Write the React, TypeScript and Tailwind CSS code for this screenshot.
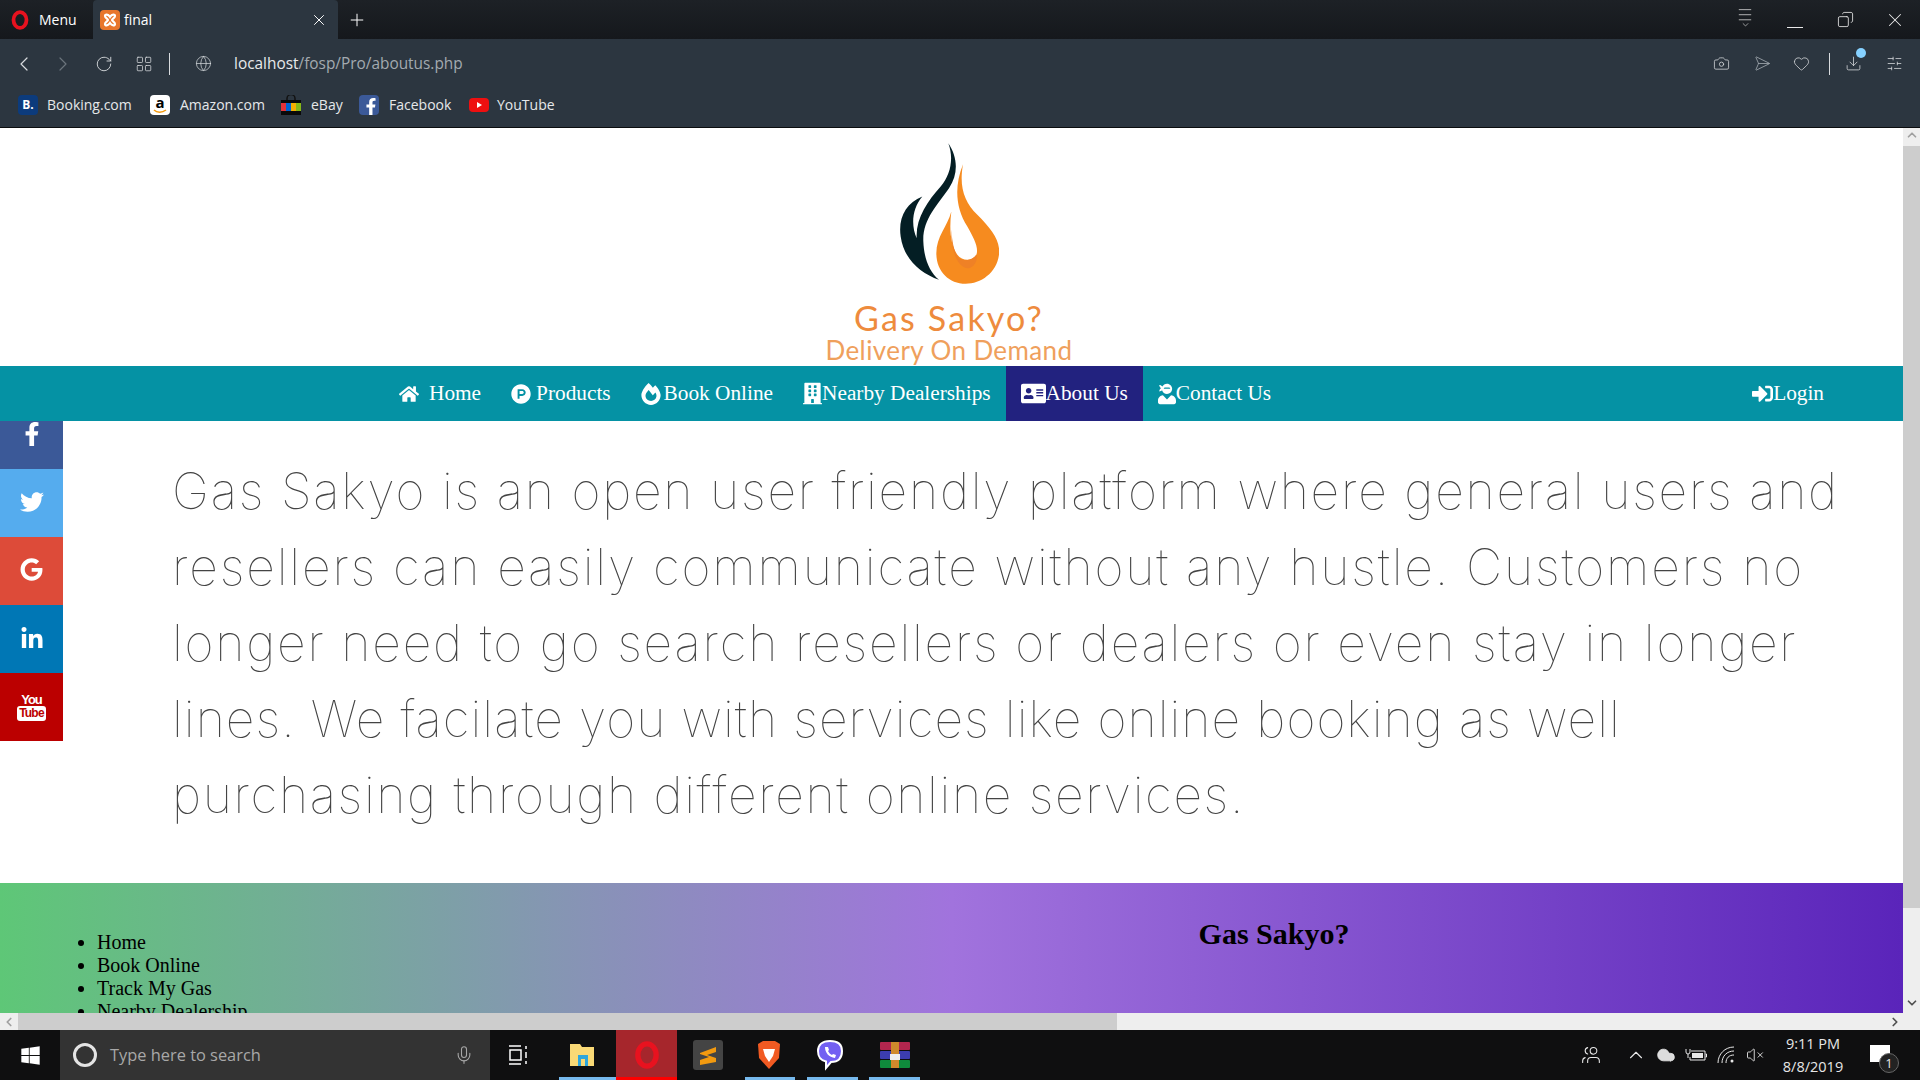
import { FaAddressCard, FaBuilding, FaFacebookF, FaFireAlt, FaGoogle, FaHome, FaLinkedinIn, FaProductHunt, FaSignInAlt, FaTwitter, FaUserNinja, FaWindows } from "react-icons/fa";
import { Camera, ChevronDown, ChevronLeft, ChevronRight, ChevronUp, Download, Globe, Heart, LayoutGrid, Menu, Mic, Plus, RotateCw, Send, SlidersHorizontal, Users, VolumeX, Copy, X, Cloud } from "lucide-react";

const uiFont = { fontFamily: '"Open Sans", "Noto Sans", sans-serif' };

function OperaMark({ size = 18 }: { size?: number }) {
  return (
    <svg width={size} height={size + 2} viewBox="0 0 20 22">
      <ellipse cx="10" cy="11" rx="7.2" ry="8.8" fill="none" stroke="#e8121f" strokeWidth="4.2" />
    </svg>
  );
}

function XamppMark() {
  return (
    <div className="w-5 h-5 rounded-sm bg-[#e8762c] flex items-center justify-center">
      <svg width="16" height="16" viewBox="0 0 16 16" fill="none" stroke="#fff" strokeWidth="2.2">
        <path d="M3 4c0-2 3-2 5 1 2-3 5-3 5-1s-3 3-3 4 3 2 3 4-3 2-5-1c-2 3-5 3-5 1s3-3 3-4-3-2-3-4z" />
      </svg>
    </div>
  );
}

function Bookmarks() {
  return (
    <div className="h-[33px] flex items-center pl-[18px] text-[14px] text-[#e6e8ea]" style={uiFont}>
      <div className="w-5 h-5 rounded-sm bg-[#0c3b7c] text-white text-[12px] font-bold flex items-center justify-center">B.</div>
      <span className="ml-[9px] w-[103px]">Booking.com</span>
      <div className="relative w-5 h-5 rounded-sm bg-white text-black text-[15px] font-bold leading-[15px] flex justify-center">
        a
        <svg className="absolute left-[3px] bottom-[1px]" width="14" height="5" viewBox="0 0 14 5">
          <path d="M1 1c3 3 8 3 12 0" fill="none" stroke="#f39a0f" strokeWidth="1.5" />
        </svg>
      </div>
      <span className="ml-[10px] w-[101px]">Amazon.com</span>
      <svg width="20" height="20" viewBox="0 0 20 20">
        <path d="M6 6V3.5a4 4 0 0 1 8 0V6" fill="none" stroke="#111" strokeWidth="1.5" />
        <rect y="5" width="20" height="15" fill="#0a0a0a" />
        <rect y="8" width="5" height="8" fill="#e53238" />
        <rect x="5" y="8" width="5" height="8" fill="#0064d2" />
        <rect x="10" y="8" width="5" height="8" fill="#f5af02" />
        <rect x="15" y="8" width="5" height="8" fill="#86b817" />
      </svg>
      <span className="ml-[10px] w-[48px]">eBay</span>
      <div className="w-5 h-5 rounded-sm bg-[#3b5998] text-white flex items-end justify-end overflow-hidden">
        <FaFacebookF className="w-[16px] h-[17px]" />
      </div>
      <span className="ml-[10px] w-[80px]">Facebook</span>
      <div className="w-5 h-[14px] rounded bg-[#ee0f10] flex items-center justify-center">
        <div className="w-0 h-0 border-y-[3px] border-y-transparent border-l-[5px] border-l-white" />
      </div>
      <span className="ml-[8px]">YouTube</span>
    </div>
  );
}

function BrowserChrome() {
  return (
    <div className="shrink-0">
      <div className="h-[39px] bg-gradient-to-b from-[#1d2126] to-[#15181c] flex items-center text-white text-[14px]" style={uiFont}>
        <div className="w-[93px] flex items-center pl-[11px] gap-[10px]">
          <OperaMark />
          <span>Menu</span>
        </div>
        <div className="w-[245px] h-full bg-[#2c3640] rounded-t flex items-center pl-[7px] pr-[10px] gap-[4px]">
          <XamppMark />
          <span className="flex-1">final</span>
          <X size={18} strokeWidth={1.3} />
        </div>
        <Plus size={20} strokeWidth={1.2} className="ml-[9px]" />
        <div className="ml-auto flex items-center text-[#e8e8e8]">
          <div className="w-[50px] flex flex-col items-center relative h-[20px]">
            <Menu size={20} strokeWidth={1} className="-mt-[4px]" />
            <ChevronDown size={11} strokeWidth={1.5} className="-mt-[3px]" />
          </div>
          <div className="w-[50px] flex justify-center"><div className="w-[16px] h-px bg-[#e8e8e8] mt-[16px]" /></div>
          <div className="w-[50px] flex justify-center"><Copy size={17} strokeWidth={1.2} className="-scale-x-100" /></div>
          <div className="w-[50px] flex justify-center"><X size={22} strokeWidth={1.1} /></div>
        </div>
      </div>
      <div className="bg-[#2c3640] border-b border-[#0b0d0f] pb-[6px]">
        <div className="h-[49px] flex items-center text-[#d8dbde]">
          <ChevronLeft size={24} strokeWidth={1.2} className="ml-[12px]" />
          <ChevronRight size={24} strokeWidth={1.2} className="ml-[15px] text-[#6b747c]" />
          <RotateCw size={18} strokeWidth={1.2} className="ml-[20px]" />
          <LayoutGrid size={18} strokeWidth={1} className="ml-[22px]" />
          <div className="ml-[16px] w-px h-[22px] bg-[#d8dbde]" />
          <Globe size={17} strokeWidth={1} className="ml-[25px]" />
          <div className="ml-[22px] text-[15.4px]" style={uiFont}>
            <span className="text-[#e8eaec]">localhost</span>
            <span className="text-[#a3aab0]">/fosp/Pro/aboutus.php</span>
          </div>
          <div className="ml-auto flex items-center">
            <Camera size={17} strokeWidth={1.1} />
            <Send size={17} strokeWidth={1.1} className="ml-[21px] rotate-45 text-[#a3aab0]" />
            <Heart size={17} strokeWidth={1.1} className="ml-[25px]" />
            <div className="ml-[19px] w-px h-[22px] bg-[#d8dbde]" />
            <div className="ml-[15px] relative">
              <Download size={17} strokeWidth={1.1} />
              <div className="absolute -top-[7px] left-[11px] w-[10px] h-[10px] rounded-full bg-[#86d1ff]" />
            </div>
            <SlidersHorizontal size={17} strokeWidth={1.1} className="ml-[24px] mr-[17px] -scale-x-100" />
          </div>
        </div>
        <Bookmarks />
      </div>
    </div>
  );
}

function Logo() {
  return (
    <div className="h-[238px] bg-white flex flex-col items-center pr-[5px] overflow-hidden">
      <svg viewBox="358 40 297 422" className="w-[99px] h-[141px] mt-[15px] shrink-0">
        <path fill="#041e24" d="M503 40C530 80 535 130 505 175C470 225 425 270 428 335C430 385 445 425 475 450C420 430 370 390 360 320C352 265 375 220 425 200C395 235 390 285 408 325C405 265 440 215 480 170C510 135 520 85 503 40Z" />
        <path fill="#f68b1f" d="M547 103C535 170 550 215 590 255C635 300 660 335 655 375C648 430 600 462 555 462C505 462 467 425 467 370C467 320 500 290 512 245C505 300 510 345 530 375C545 395 575 395 587 375C595 355 580 325 560 290C525 235 520 170 547 103Z" />
        <path fill="#ef8126" d="M512 300C515 350 525 375 535 385C550 395 575 393 587 375C592 385 585 410 565 415C535 418 510 370 512 300Z" />
      </svg>
      <div className="mt-[15px] text-[34px] leading-[38px] tracking-[2.2px] text-[#ee8b3d]" style={{ fontFamily: "Lato, sans-serif" }}>Gas Sakyo?</div>
      <div className="-mt-[2px] text-[26px] leading-[30px] tracking-[0.4px] text-[#efa05c] whitespace-nowrap" style={{ fontFamily: "Lato, sans-serif" }}>Delivery On Demand</div>
    </div>
  );
}

function NavLink({ icon, label, active, gap }: { icon: React.ReactNode; label: string; active?: boolean; gap?: string }) {
  return (
    <a className={`h-full flex items-center px-[15px] text-white ${active ? "bg-[#22227f]" : ""}`}>
      <span className={gap}>{icon}</span>
      <span>{label}</span>
    </a>
  );
}

function NavBar() {
  return (
    <nav className="relative z-10 h-[55px] bg-[#0592a4] flex items-center pl-[384px] pr-[64px] text-[21.3px]" style={{ fontFamily: '"Liberation Serif", serif' }}>
      <NavLink icon={<FaHome size={20} />} label="Home" gap="mr-[10px]" />
      <NavLink icon={<FaProductHunt size={20} />} label="Products" gap="mr-[5px]" />
      <NavLink icon={<FaFireAlt className="w-[20px] h-[22px]" />} label="Book Online" gap="mr-[3px]" />
      <NavLink icon={<FaBuilding className="w-[19px] h-[23px]" />} label="Nearby Dealerships" />
      <NavLink icon={<FaAddressCard size={25} />} label="About Us" active />
      <NavLink icon={<FaUserNinja className="w-[18px] h-[22px]" />} label="Contact Us" />
      <div className="ml-auto h-full flex">
        <NavLink icon={<FaSignInAlt size={21} />} label="Login" />
      </div>
    </nav>
  );
}

function SocialBar() {
  const cell = "h-[68px] flex items-center justify-center text-white";
  return (
    <aside className="absolute left-0 top-[55px] w-[63px] h-[320px] overflow-hidden">
      <div className={`${cell} -mt-[20px] pb-[2px] bg-[#3b5998]`}><FaFacebookF size={24} /></div>
      <div className={`${cell} pb-[2px] bg-[#55acee]`}><FaTwitter size={24} /></div>
      <div className={`${cell} pb-[3px] bg-[#dd4b39]`}><FaGoogle size={23} /></div>
      <div className={`${cell} bg-[#0077b5]`}><FaLinkedinIn size={24} /></div>
      <div className={`${cell} bg-[#bb0000] flex-col`} style={{ fontFamily: '"Liberation Sans", sans-serif' }}>
        <span className="text-[13px] leading-[13px] font-bold tracking-[-1px]">You</span>
        <span className="bg-white text-[#bb0000] rounded-[3px] text-[12px] leading-[15px] font-bold px-[2px] tracking-[-0.8px]">Tube</span>
      </div>
    </aside>
  );
}

function About() {
  // Inter stands in for the page's thin geometric font, so each line gets its own tracking to keep its width
  const lines = [
    { text: "Gas Sakyo is an open user friendly platform where general users and", track: "tracking-[1.75px]" },
    { text: "resellers can easily communicate without any hustle. Customers no", track: "tracking-[1.85px]" },
    { text: "longer need to go search resellers or dealers or even stay in longer", track: "tracking-[1.77px]" },
    { text: "lines. We facilate you with services like online booking as well", track: "tracking-[1.03px]" },
    { text: "purchasing through different online services.", track: "tracking-[1.62px]" },
  ];
  return (
    <div className="h-[462px] bg-white pt-[32px] pl-[172px] text-[50px] leading-[76px] text-[#444] font-thin whitespace-nowrap" style={{ fontFamily: "Inter, sans-serif" }}>
      {lines.map((l) => (
        <div key={l.text} className={l.track}>{l.text}</div>
      ))}
    </div>
  );
}

function Footer() {
  return (
    <footer className="h-[130px] overflow-hidden bg-[linear-gradient(to_right,#5ec777,#a173dd,#5a24ba)] flex text-black" style={{ fontFamily: '"Liberation Serif", serif' }}>
      <ul className="list-disc pl-[97px] pt-[48px] text-[20px] leading-[23px] w-[1000px] shrink-0">
        <li>Home</li>
        <li>Book Online</li>
        <li>Track My Gas</li>
        <li>Nearby Dealership</li>
      </ul>
      <h2 className="w-[548px] text-center text-[30px] font-bold pt-[28px]">Gas Sakyo?</h2>
    </footer>
  );
}

function Scrollbars() {
  return (
    <div className="h-[17px] shrink-0 bg-[#eeeeee] flex items-center text-[#a0a0a0]">
      <div className="w-[18px] flex justify-center"><ChevronLeft size={14} strokeWidth={3} /></div>
      <div className="w-[1099px] h-full bg-[#cdcdcd]" />
      <div className="ml-auto mr-[17px] w-[17px] flex justify-center text-[#505050]"><ChevronRight size={14} strokeWidth={3} /></div>
    </div>
  );
}

function Taskbar() {
  const underline = "absolute bottom-0 h-[3px] bg-[#76b9ed]";
  return (
    <div className="h-[50px] shrink-0 bg-[#0f0f10] flex items-center text-white relative" style={uiFont}>
      <div className="w-[60px] flex justify-center"><FaWindows size={21} /></div>
      <div className="w-[430px] h-full bg-[#333333] flex items-center pl-[13px] text-[#a8a8a8] text-[16.4px]">
        <div className="w-[24px] h-[24px] rounded-full border-[3px] border-[#e4e4e4]" />
        <span className="ml-[13px]">Type here to search</span>
        <Mic size={20} strokeWidth={1.3} className="ml-auto mr-[16px]" />
      </div>
      <div className="w-[58px] flex justify-center">
        <svg width="20" height="20" viewBox="0 0 20 20" fill="none" stroke="#fff" strokeWidth="1.5">
          <path d="M0 1h12M0 19h12M1 5h11v10H1zM17 1v3M17 7v6M17 16v3" />
        </svg>
      </div>
      <div className="relative w-[68px] h-full flex items-center justify-center pl-[2px]">
        <svg width="28" height="26" viewBox="0 0 28 26">
          <path d="M1 2h10l2 3h12v19H1z" fill="#f9d976" />
          <path d="M9 24V13h10v11h-3v-7h-4v7z" fill="#2ea6dd" />
        </svg>
        <div className={`${underline} left-[11px] right-0`} />
      </div>
      <div className="w-[61px] h-full bg-[#a6262c] relative flex items-center justify-center">
        <OperaMark size={26} />
        <div className="absolute bottom-0 inset-x-0 h-[3px] bg-[#ff0000]" />
      </div>
      <div className="w-[61px] flex justify-center">
        <div className="w-[30px] h-[30px] rounded-[3px] bg-[#444] flex items-center justify-center">
          <svg width="18" height="22" viewBox="0 0 18 22"><path d="M1 9 17 3v5L8 11l9 3v4L1 21v-5l9-3-9-3z" fill="#f39a0f" /></svg>
        </div>
      </div>
      <div className="relative w-[61px] h-full flex items-center justify-center">
        <svg width="26" height="30" viewBox="0 0 26 30">
          <path d="M2 4 7 1h12l5 3-1 14-10 11L3 18z" fill="#f15a22" />
          <path d="M7 9h12l-2 7-4 6-4-6z" fill="#fff" />
        </svg>
        <div className={`${underline} left-[7px] right-[4px]`} />
      </div>
      <div className="relative w-[62px] h-full flex items-center justify-center">
        <svg width="28" height="32" viewBox="0 0 28 32">
          <path d="M14 2c8 0 12 3 12 10s-4 11-11 11l-5 6v-6.500C4 21 2 18 2 12S6 2 14 2z" fill="#7360f2" stroke="#fff" strokeWidth="2" />
          <path d="M9 8c0 6 4 10 10 11l1-3-3-1-1 1c-2-1-3-2-4-4l1-1-1-3z" fill="#fff" />
        </svg>
        <div className={`${underline} left-[8px] right-[3px]`} />
      </div>
      <div className="relative w-[61px] h-full flex items-center justify-center pl-[6px]">
        <svg width="30" height="26" viewBox="0 0 30 26">
          <rect width="30" height="8" rx="1" fill="#b3264e" />
          <rect y="9" width="30" height="8" rx="1" fill="#3c3db0" />
          <rect y="18" width="30" height="8" rx="1" fill="#0f8a3c" />
          <rect x="11" width="8" height="26" fill="#d08a2c" />
          <rect x="10" y="12" width="10" height="6" fill="#eee" />
        </svg>
        <div className={`${underline} left-[8px] right-[2px]`} />
      </div>
      <div className="ml-auto flex items-center text-[#e8e8e8]">
        <Users size={20} strokeWidth={1.3} className="-scale-x-100" />
        <ChevronUp size={22} strokeWidth={1.2} className="ml-[24px]" />
        <Cloud size={20} fill="#ddd" strokeWidth={1} className="ml-[9px]" />
        <svg width="22" height="14" viewBox="0 0 22 14" fill="none" stroke="#e8e8e8" className="ml-[9px]">
          <path d="M6 3h14v9H5V9M20.500 6h1v3h-1" />
          <rect x="7" y="5" width="11" height="5" fill="#e8e8e8" stroke="none" />
          <path d="M1 1v3a2 2 0 0 0 4 0V1M3 6v4" />
        </svg>
        <svg width="18" height="18" viewBox="0 0 18 18" fill="none" stroke="#e8e8e8" strokeWidth="1" className="ml-[10px]">
          <path d="M1 17C1 8 8 1 17 1M5 17C5 10 10 5 17 5M9 17c0-5 3-8 8-8" />
          <circle cx="15" cy="15" r="1.500" fill="#e8e8e8" stroke="none" />
        </svg>
        <VolumeX size={18} strokeWidth={1.2} className="ml-[11px]" />
        <div className="ml-[4px] w-[90px] text-center text-[14.500px] leading-[23px] text-[#e6e6e6]">
          <div>9:11 PM</div>
          <div>8/8/2019</div>
        </div>
        <div className="relative ml-[12px] mr-[30px] w-[20px] h-[20px]">
          <div className="w-[20px] h-[17px] bg-white" />
          <div className="absolute -right-[9px] top-[8px] w-[20px] h-[20px] rounded-full bg-[#222] border border-[#666] text-[13px] leading-[18px] text-center">1</div>
        </div>
      </div>
    </div>
  );
}

export default function App() {
  return (
    <div className="w-[1920px] h-[1080px] overflow-hidden flex flex-col">
      <BrowserChrome />
      <div className="flex-1 flex min-h-0">
        <main className="flex-1 overflow-hidden">
          <Logo />
          <div className="relative">
            <NavBar />
            <SocialBar />
            <About />
            <Footer />
          </div>
        </main>
        <div className="w-[17px] bg-[#eeeeee] flex flex-col text-[#a0a0a0]">
          <div className="h-[18px] flex justify-center"><ChevronUp size={14} strokeWidth={3} /></div>
          <div className="h-[762px] bg-[#cdcdcd]" />
          <div className="mt-auto h-[17px] flex justify-center text-[#505050]"><ChevronDown size={14} strokeWidth={3} /></div>
        </div>
      </div>
      <Scrollbars />
      <Taskbar />
    </div>
  );
}
